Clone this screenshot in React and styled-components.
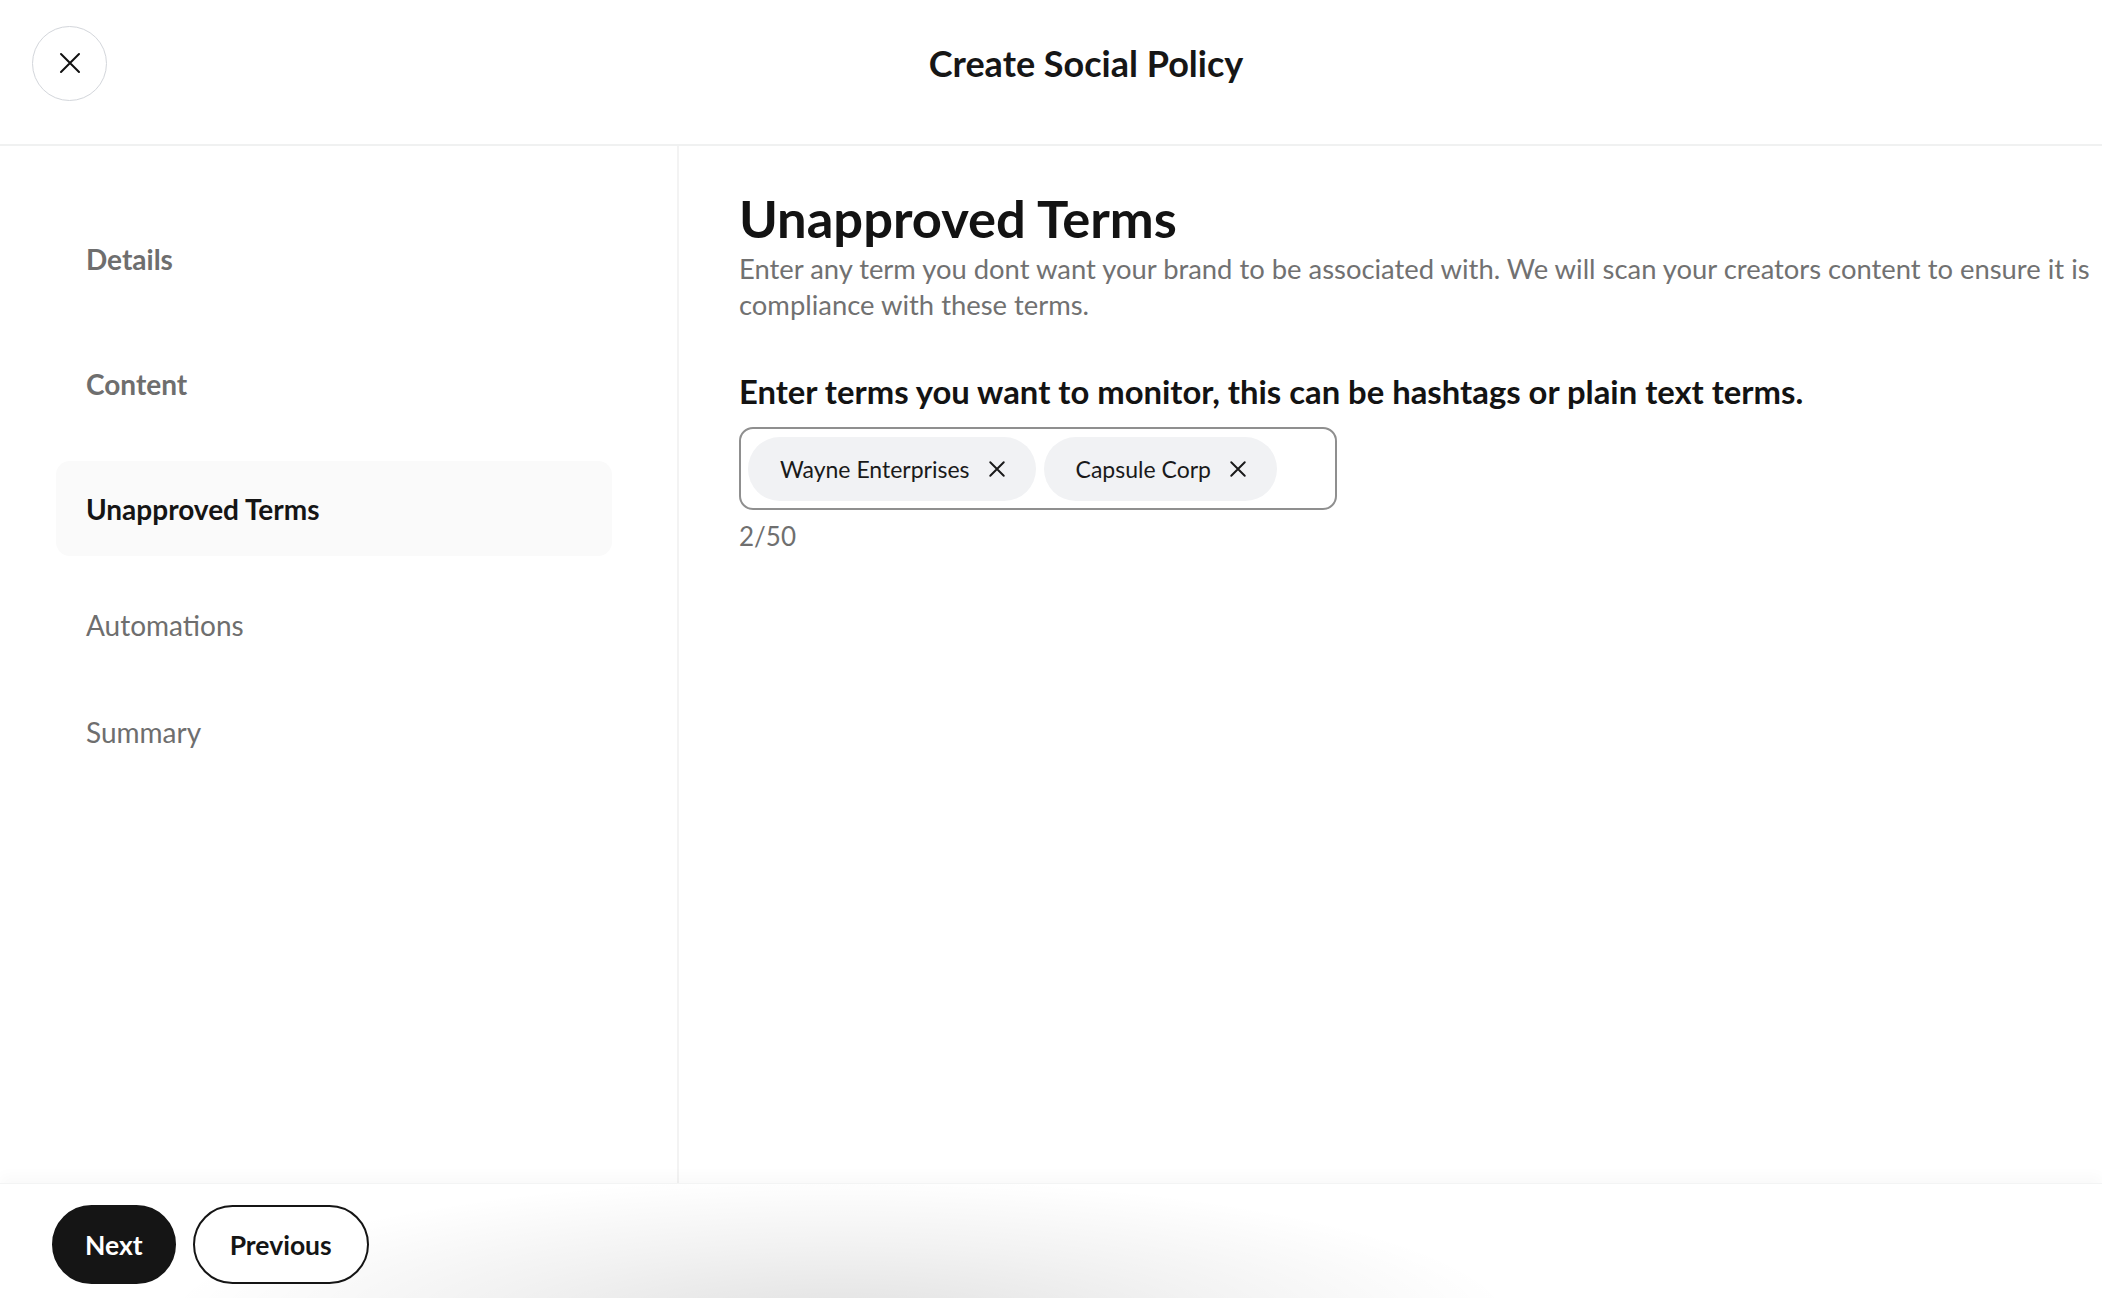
import React from "react";
import styled, { createGlobalStyle } from "styled-components";

const steps = [
  { label: "Details", state: "done" },
  { label: "Content", state: "done" },
  { label: "Unapproved Terms", state: "active" },
  { label: "Automations", state: "todo" },
  { label: "Summary", state: "todo" },
];

const terms = ["Wayne Enterprises", "Capsule Corp"];

const CrossIcon = ({ size, stroke }) => (
  <svg width={size} height={size} viewBox="0 0 24 24" fill="none">
    <path d="M3 3L21 21M21 3L3 21" stroke="currentColor" strokeWidth={stroke} strokeLinecap="round" />
  </svg>
);

const App = () => {
  return (
    <Page>
      <GlobalStyle />
      <Header>
        <CloseButton aria-label="Close">
          <CrossIcon size={24} stroke={2} />
        </CloseButton>
        <Title>Create Social Policy</Title>
      </Header>
      <Body>
        <Sidebar>
          {steps.map((step) => (
            <StepItem key={step.label} $state={step.state}>
              {step.label}
            </StepItem>
          ))}
        </Sidebar>
        <Main>
          <Heading>Unapproved Terms</Heading>
          <Description>
            Enter any term you dont want your brand to be associated with. We will scan your creators content to ensure it is compliance with these terms.
          </Description>
          <FieldLabel>Enter terms you want to monitor, this can be hashtags or plain text terms.</FieldLabel>
          <TermsBox>
            {terms.map((term) => (
              <Chip key={term}>
                {term}
                <ChipRemove aria-label={`Remove ${term}`}>
                  <CrossIcon size={18} stroke={2.6} />
                </ChipRemove>
              </Chip>
            ))}
          </TermsBox>
          <Counter>{terms.length}/50</Counter>
        </Main>
      </Body>
      <Footer>
        <PrimaryButton>Next</PrimaryButton>
        <SecondaryButton>Previous</SecondaryButton>
      </Footer>
    </Page>
  );
};

const GlobalStyle = createGlobalStyle`
  html, body {
    margin: 0;
    padding: 0;
    background: #ffffff;
    overflow: hidden;
  }
  body {
    font-family: Lato, "Noto Sans", sans-serif;
    color: #161616;
  }
`;

const Page = styled.div`
  display: flex;
  flex-direction: column;
  height: 100vh;
  width: 100%;
`;

const Header = styled.header`
  height: 146px;
  box-sizing: border-box;
  display: flex;
  align-items: center;
  padding: 0 37px 18px 32px;
  border-bottom: 2px solid #f0f1f1;
  flex: none;
`;

const CloseButton = styled.button`
  width: 75px;
  height: 75px;
  border-radius: 50%;
  border: 1.5px solid #d3d6db;
  background: #ffffff;
  color: #111111;
  display: flex;
  align-items: center;
  justify-content: center;
  padding: 0;
  flex: none;
  cursor: pointer;
`;

const Title = styled.h1`
  flex: 1;
  margin: 0;
  text-align: center;
  font-size: 36px;
  font-weight: 700;
  color: #161616;
`;

const Body = styled.div`
  flex: 1;
  display: flex;
  min-height: 0;
`;

const Sidebar = styled.nav`
  width: 679px;
  box-sizing: border-box;
  flex: none;
  padding: 65px 65px 0 56px;
  border-right: 2px solid #f3f3f3;
  display: flex;
  flex-direction: column;
  gap: 30px;
`;

const StepItem = styled.div`
  height: ${(props) => (props.$state === "todo" ? "77px" : "95px")};
  display: flex;
  align-items: center;
  padding-left: 30px;
  border-radius: 14px;
  font-size: 28px;
  font-weight: ${(props) => (props.$state === "todo" ? 400 : 700)};
  color: ${(props) => (props.$state === "active" ? "#151515" : "#6e6e6e")};
  background: ${(props) => (props.$state === "active" ? "#fafafa" : "transparent")};
`;

const Main = styled.main`
  flex: 1;
  min-width: 0;
  padding: 43px 0 0 60px;
  display: flex;
  flex-direction: column;
  align-items: flex-start;
`;

const Heading = styled.h2`
  margin: 0;
  font-size: 52.5px;
  line-height: 57px;
  font-weight: 700;
  color: #131313;
`;

const Description = styled.p`
  margin: 5px 0 0;
  font-size: 27.4px;
  line-height: 36px;
  color: #717171;
`;

const FieldLabel = styled.div`
  margin-top: 49px;
  font-size: 32.8px;
  line-height: 40px;
  font-weight: 700;
  color: #131313;
`;

const TermsBox = styled.div`
  margin-top: 15px;
  width: 598px;
  height: 83px;
  box-sizing: border-box;
  border: 2px solid #8f8f8f;
  border-radius: 14px;
  padding: 8px 7px;
  display: flex;
  align-items: center;
  gap: 8px;
`;

const Chip = styled.div`
  height: 64px;
  box-sizing: border-box;
  display: flex;
  align-items: center;
  gap: 18px;
  padding: 0 30px 0 32px;
  border-radius: 32px;
  background: #f1f2f4;
  font-size: 23px;
  color: #1a1a1a;
`;

const ChipRemove = styled.span`
  display: flex;
  align-items: center;
  color: #1a1a1a;
`;

const Counter = styled.div`
  margin-top: 9px;
  font-size: 26px;
  line-height: 34px;
  color: #6f6f6f;
`;

const Footer = styled.footer`
  height: 115px;
  box-sizing: border-box;
  flex: none;
  display: flex;
  align-items: flex-start;
  gap: 17px;
  padding: 21px 0 0 52px;
  border-top: 1px solid #f3f4f4;
  box-shadow: 0 -8px 12px rgba(0, 0, 0, 0.025);
  background:
    radial-gradient(ellipse 680px 150px at 840px 125%, rgba(0, 0, 0, 0.12), rgba(0, 0, 0, 0.05) 55%, rgba(0, 0, 0, 0) 100%),
    #ffffff;
`;

const PrimaryButton = styled.button`
  height: 79px;
  padding: 0 31px;
  border-radius: 40px;
  border: 2px solid #151515;
  background: #151515;
  color: #ffffff;
  font-family: Lato, "Noto Sans", sans-serif;
  font-size: 26.5px;
  font-weight: 700;
  cursor: pointer;
`;

const SecondaryButton = styled(PrimaryButton)`
  padding: 0 35px;
  background: #ffffff;
  color: #151515;
`;

export default App;
